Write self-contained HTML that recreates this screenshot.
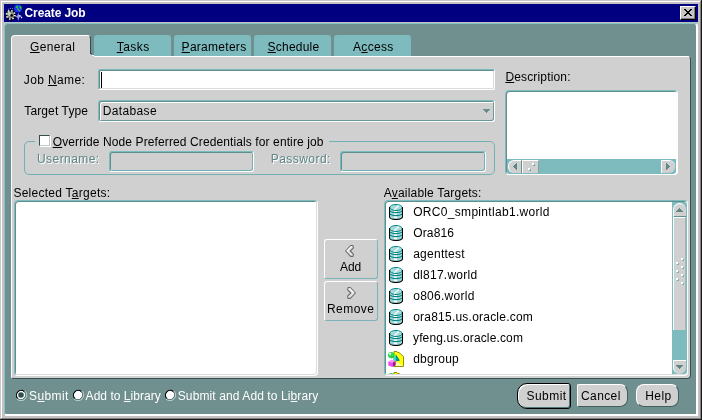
<!DOCTYPE html>
<html>
<head>
<meta charset="utf-8">
<title>Create Job</title>
<style>
html,body{margin:0;padding:0;}
body{width:702px;height:420px;overflow:hidden;background:#c0c0c0;position:relative;
  font-family:"Liberation Sans",sans-serif;font-size:12px;line-height:14px;color:#000;}
.a{position:absolute;box-sizing:border-box;}
.t{position:absolute;white-space:nowrap;line-height:14px;height:14px;}
u{text-decoration:underline;text-underline-offset:1px;text-decoration-thickness:1px;}
/* window frame */
#f0{left:0;top:0;width:702px;height:420px;background:#181818;}
#f1{left:0;top:0;width:701px;height:419px;background:#c8c4c8;}
#f2{left:1px;top:1px;width:700px;height:418px;background:#808080;}
#f3{left:1px;top:1px;width:699px;height:417px;background:#ffffff;}
#f4{left:2px;top:2px;width:698px;height:416px;background:#c4c0c4;}
#title{left:4px;top:4px;width:694px;height:18px;background:#000080;}
#close{left:680px;top:6px;width:16px;height:14px;background:#c6c3c6;
  border-top:1px solid #fff;border-left:1px solid #fff;border-right:1px solid #000;border-bottom:1px solid #000;}
#close i{position:absolute;left:0;top:0;right:0;bottom:0;border-right:1px solid #808080;border-bottom:1px solid #808080;}
/* teal panel */
#teal{left:4px;top:23px;width:694px;height:393px;background:#708f8f;
  border-left:1px solid #84c4c4;border-top:1px solid #84c4c4;border-right:2px solid #fff;border-bottom:2px solid #fff;border-radius:4px 4px 0 3px;}
/* gray panel */
#panel{left:11px;top:56px;width:680px;height:323px;background:#d0d0d0;
  border-top:1px solid #fff;border-left:1px solid #fff;border-right:1px solid #385050;border-bottom:1px solid #385050;
  border-radius:0 4px 4px 3px;}
.tab{top:35px;height:21px;width:77px;background:#7dbbbf;border-radius:3px 3px 0 0;}
#tab0{left:11px;top:35px;width:80px;height:18px;background:#d0d0d0;border-top:1px solid #fff;border-left:1px solid #fff;
  border-right:1px solid #2f4f4f;border-radius:4px 4px 0 0;}
/* fields */
.fld{background:#fff;border:1px solid #7bbcbf;border-right-color:#fff;border-bottom-color:#fff;border-radius:2px;box-shadow:inset 1px 1px 0 #668c8c,inset -1px -1px 0 #dcdcdc;}
.dis{background:#d0d0d0;border:1px solid #7bbcbf;border-right-color:#fff;border-bottom-color:#fff;border-radius:3px;box-shadow:inset 1px 1px 0 #668c8c,inset -1px -1px 0 #689a9c,inset 2px 2px 0 #fff;}
.dfld{background:#d0d0d0;border:1px solid #7bbcbf;border-right-color:#fff;border-bottom-color:#fff;border-radius:3px;box-shadow:inset 1px 1px 0 #5f8f8f,inset -1px -1px 0 #6fb0b4;}
.btn{background:#d0d0d0;border:1px solid #7ab4b8;border-top-color:#fff;border-left-color:#fff;border-radius:3px;}
.btn2{background:#d0d0d0;border:1px solid #3f5f5f;border-top-color:#fff;border-left-color:#fff;}
.sb{background:#d0d0d0;border-top:1px solid #fff;border-left:1px solid #fff;}
.gr{color:#5f8787;text-shadow:1px 1px 0 #fff;}
.w{color:#fff;}
</style>
</head>
<body>
<div id="w" class="a" style="left:0;top:0;width:702px;height:420px;will-change:transform">
<div class="a" id="f0"></div><div class="a" id="f1"></div><div class="a" id="f2"></div><div class="a" id="f3"></div><div class="a" id="f4"></div>
<div class="a" id="title">
  <svg class="a" style="left:0px;top:0px" width="20" height="18" viewBox="4 4 20 18">
    <circle cx="10.900" cy="15.100" r="4.200" fill="none" stroke="#000" stroke-width="2.200"/>
    <circle cx="10.700" cy="14.900" r="3.300" fill="#909090"/>
    <circle cx="10.700" cy="14.900" r="4.200" fill="none" stroke="#f4f4f4" stroke-width="1.700" stroke-dasharray="1.500 1.800"/>
    <circle cx="10.200" cy="14.400" r="1.500" fill="#d8d8d8"/>
    <circle cx="11.600" cy="15.400" r="1.300" fill="#000"/>
    <path d="M7.500 11.500l2.500 .5l-.5 2.500l-2 .5z" fill="#a0e0b0"/>
    <path d="M8 9.500A6 6 0 0 1 13 8.700" fill="none" stroke="#b0b0a0" stroke-width="1" stroke-dasharray="1 1.200"/>
    <circle cx="18" cy="8.400" r="3.900" fill="#1838f8"/>
    <path d="M15.500 7.500l1.500-2l1.200 .3l-.5 2.200l1.500 1.500l1.300 1.500l-.8 .6l-1.800-1.800l-1-1.500z" fill="#20c828"/>
    <path d="M19.500 5.800l1.800 .8l.5 2l-1 1l-.6-1.600l-1.200-1z" fill="#20c828"/>
    <rect x="17.600" y="9" width="1" height="1" fill="#f09030"/>
    <path d="M18.300 12.800l1 2.800l2.800 1l-2.800 1l-1 3.200l-1-3.200l-2-1l2-1z" fill="#9898e0"/>
    <rect x="19.300" y="15" width="1.200" height="1.200" fill="#fff"/><rect x="21" y="17" width="1.200" height="1.200" fill="#fff"/>
  </svg>
</div>
<div class="t w" style="left:24.5px;top:6px;letter-spacing:-0.1px;font-weight:bold">Create Job</div>
<div class="a" id="close"><i></i>
  <svg class="a" style="left:3px;top:2px" width="8" height="7" viewBox="0 0 8 7" shape-rendering="crispEdges"><path d="M0 0h2v1h1v1h2v-1h1v-1h2v1h-1v1h-1v1h-1v1h1v1h1v1h1v1h-2v-1h-1v-1h-2v1h-1v1h-2v-1h1v-1h1v-1h1v-1h-1v-1h-1v-1h-1z" fill="#000"/></svg>
</div>
<div class="a" id="teal"></div>

<!-- tabs -->
<div class="a tab" style="left:94px"></div>
<div class="a tab" style="left:174px"></div>
<div class="a tab" style="left:254px"></div>
<div class="a tab" style="left:334px"></div>
<div class="a" id="panel"></div>
<div class="a" id="tab0"></div>
<div class="a" style="left:11px;top:53px;width:79px;height:5px;background:#d0d0d0;border-left:1px solid #fff"></div>
<svg class="a" style="left:89px;top:52px" width="6" height="5" viewBox="0 0 6 5" shape-rendering="crispEdges">
<path d="M0 0h1v1h1v1h1v1h2v2h-5z" fill="#d0d0d0"/><rect x="1" y="0" width="1" height="1" fill="#2f4f4f"/><rect x="1" y="1" width="2" height="1" fill="#2f4f4f"/><rect x="2" y="2" width="1" height="1" fill="#4f9f9f"/><rect x="3" y="3" width="2" height="1" fill="#fff"/><rect x="5" y="4" width="1" height="1" fill="#fff"/>
</svg>
<div class="t" style="left:30px;top:40px;letter-spacing:0.375px"><u>G</u>eneral</div>
<div class="t" style="left:116.75px;top:40px;letter-spacing:0.45px"><u>T</u>asks</div>
<div class="t" style="left:181.6px;top:40px;letter-spacing:0.278px"><u>P</u>arameters</div>
<div class="t" style="left:267.6px;top:40px;letter-spacing:0.22px"><u>S</u>chedule</div>
<div class="t" style="left:353px;top:40px;letter-spacing:0.3px">A<u>c</u>cess</div>

<!-- form -->
<div class="t" style="left:23.75px;top:73px;letter-spacing:0.375px">Job <u>N</u>ame:</div>
<div class="a fld" style="left:98px;top:69px;width:397px;height:21px"></div>
<div class="a" style="left:101px;top:72px;width:1px;height:16px;background:#000"></div>
<div class="t" style="left:24.25px;top:104px;letter-spacing:0.125px">Target Type</div>
<div class="a dis" style="left:98px;top:100px;width:397px;height:22px"></div>
<div class="t" style="left:102.75px;top:104px;letter-spacing:0.357px">Database</div>
<svg class="a" style="left:483px;top:109px" width="7" height="4" viewBox="0 0 7 4" shape-rendering="crispEdges"><path d="M0 0h7v1h-1v1h-1v1h-1v1h-1v-1h-1v-1h-1v-1h-1z" fill="#6b8b8b"/></svg>

<div class="t" style="left:505.4px;top:70px;letter-spacing:0.16px"><u>D</u>escription:</div>
<div class="a fld" style="left:505px;top:90px;width:173px;height:85px;border-radius:4px;box-shadow:inset 1px 1px 0 #668c8c,inset -1px 0 0 #fff"></div>
<div class="a" style="left:507px;top:159px;width:169px;height:15px;background:#7dbbbf;border-radius:0 0 3px 2px"></div>
<div class="a sb" style="left:508px;top:160px;width:14px;height:13px;border-radius:6px 0 0 6px;border-right:1px solid #5f8f8f"></div>
<svg class="a" style="left:513px;top:163px" width="4" height="7" viewBox="0 0 4 7" shape-rendering="crispEdges"><path d="M3 0h1v7h-1v-1h-1v-1h-1v-1h-1v-1h1v-1h1v-1h1z" fill="#5f8787"/></svg>
<div class="a sb" style="left:522px;top:160px;width:17px;height:13px;border-right:1px solid #8aa0a0"></div>
<div class="a" style="left:532px;top:163px;width:2px;height:2px;background:#fff;box-shadow:1px 1px 0 #5fb0b0"></div>
<div class="a" style="left:528px;top:168px;width:2px;height:2px;background:#fff;box-shadow:1px 1px 0 #5fb0b0"></div>
<div class="a sb" style="left:661px;top:160px;width:14px;height:13px;border-radius:0 6px 6px 0"></div>
<svg class="a" style="left:666px;top:163px" width="4" height="7" viewBox="0 0 4 7" shape-rendering="crispEdges"><path d="M0 0h1v1h1v1h1v1h1v1h-1v1h-1v1h-1v1h-1z" fill="#5f8787"/></svg>

<!-- group box -->
<div class="a" style="left:24px;top:141px;width:471px;height:34px;border:1px solid #72b0b4;border-radius:5px"></div>
<div class="a" style="left:35px;top:135px;width:294px;height:12px;background:#d0d0d0"></div>
<div class="a" style="left:39px;top:135px;width:11px;height:11px;background:#fff;border:1px solid #2f4f4f;border-right-color:#c0cccc;border-bottom-color:#c0cccc;box-shadow:1px 1px 0 #fff"></div>
<div class="t" style="left:52.7px;top:135px;letter-spacing:0.108px"><u>O</u>verride Node Preferred Credentials for entire job</div>
<div class="t gr" style="left:37px;top:152px;letter-spacing:0.438px">Username:</div>
<div class="a dfld" style="left:109px;top:151px;width:145px;height:21px"></div>
<div class="t gr" style="left:270.75px;top:152px;letter-spacing:0.45px">Password:</div>
<div class="a dfld" style="left:340px;top:151px;width:146px;height:21px"></div>

<!-- lists -->
<div class="t" style="left:13.4px;top:186px;letter-spacing:0.262px">Selected T<u>a</u>rgets:</div>
<div class="a fld" style="left:14px;top:200px;width:304px;height:176px;border-radius:4px"></div>
<div class="t" style="left:383.75px;top:186px;letter-spacing:0.191px">A<u>v</u>ailable Targets:</div>
<div class="a fld" style="left:384px;top:200px;width:304px;height:176px;border-radius:4px"></div>
<div class="a" id="avail" style="left:0;top:0;width:672px;height:374px;overflow:hidden">
<svg class="a" style="left:389px;top:204px" width="14" height="16" viewBox="0 0 14 16"><path d="M0.5 3.5v9.200c0 1.500 2.900 2.800 6.500 2.800s6.500-1.300 6.500-2.800v-9.200z" fill="#a0d6d6"/> <path d="M1 7.100c1.300 1 3.500 1.500 6 1.500s4.700-.5 6-1.500M1 10.100c1.300 1 3.500 1.500 6 1.500s4.700-.5 6-1.500" stroke="#008686" stroke-width="1.100" fill="none"/> <path d="M5 6.900h3v1h-3zM5 9.400h3v1.400h-3zM5 12.400h3v1.600h-3z" fill="#fff"/> <ellipse cx="7" cy="3.500" rx="6.200" ry="3" fill="#a8dcdc" stroke="#008484" stroke-width="1"/> <path d="M5.300 5.900L9.900 1.300" stroke="#fff" stroke-width="1.200"/> <path d="M0.500 3v9.700c0 1.500 2.900 2.800 6.500 2.800s6.500-1.300 6.500-2.800v-9.700" fill="none" stroke="#000" stroke-width="1.100"/></svg><div class="t" style="left:413.2px;top:205px;letter-spacing:0.312px">ORC0_smpintlab1.world</div>
<svg class="a" style="left:389px;top:225px" width="14" height="16" viewBox="0 0 14 16"><path d="M0.5 3.5v9.200c0 1.500 2.900 2.800 6.500 2.800s6.500-1.300 6.500-2.800v-9.200z" fill="#a0d6d6"/> <path d="M1 7.100c1.300 1 3.500 1.500 6 1.500s4.700-.5 6-1.500M1 10.100c1.300 1 3.500 1.500 6 1.500s4.700-.5 6-1.500" stroke="#008686" stroke-width="1.100" fill="none"/> <path d="M5 6.900h3v1h-3zM5 9.400h3v1.400h-3zM5 12.400h3v1.600h-3z" fill="#fff"/> <ellipse cx="7" cy="3.500" rx="6.200" ry="3" fill="#a8dcdc" stroke="#008484" stroke-width="1"/> <path d="M5.300 5.900L9.900 1.300" stroke="#fff" stroke-width="1.200"/> <path d="M0.500 3v9.700c0 1.500 2.900 2.800 6.500 2.800s6.500-1.300 6.500-2.800v-9.700" fill="none" stroke="#000" stroke-width="1.100"/></svg><div class="t" style="left:413.2px;top:226px;letter-spacing:0.15px">Ora816</div>
<svg class="a" style="left:389px;top:246px" width="14" height="16" viewBox="0 0 14 16"><path d="M0.5 3.5v9.200c0 1.500 2.900 2.800 6.500 2.800s6.500-1.300 6.500-2.800v-9.200z" fill="#a0d6d6"/> <path d="M1 7.100c1.300 1 3.500 1.500 6 1.500s4.700-.5 6-1.500M1 10.100c1.300 1 3.500 1.500 6 1.500s4.700-.5 6-1.500" stroke="#008686" stroke-width="1.100" fill="none"/> <path d="M5 6.900h3v1h-3zM5 9.400h3v1.400h-3zM5 12.400h3v1.600h-3z" fill="#fff"/> <ellipse cx="7" cy="3.500" rx="6.200" ry="3" fill="#a8dcdc" stroke="#008484" stroke-width="1"/> <path d="M5.300 5.900L9.900 1.300" stroke="#fff" stroke-width="1.200"/> <path d="M0.500 3v9.700c0 1.500 2.900 2.800 6.500 2.800s6.500-1.300 6.500-2.800v-9.700" fill="none" stroke="#000" stroke-width="1.100"/></svg><div class="t" style="left:413.2px;top:247px;letter-spacing:0.25px">agenttest</div>
<svg class="a" style="left:389px;top:267px" width="14" height="16" viewBox="0 0 14 16"><path d="M0.5 3.5v9.200c0 1.500 2.900 2.800 6.500 2.800s6.500-1.300 6.500-2.800v-9.200z" fill="#a0d6d6"/> <path d="M1 7.100c1.300 1 3.500 1.500 6 1.500s4.700-.5 6-1.500M1 10.100c1.300 1 3.500 1.500 6 1.500s4.700-.5 6-1.500" stroke="#008686" stroke-width="1.100" fill="none"/> <path d="M5 6.900h3v1h-3zM5 9.400h3v1.400h-3zM5 12.400h3v1.600h-3z" fill="#fff"/> <ellipse cx="7" cy="3.500" rx="6.200" ry="3" fill="#a8dcdc" stroke="#008484" stroke-width="1"/> <path d="M5.300 5.900L9.900 1.300" stroke="#fff" stroke-width="1.200"/> <path d="M0.500 3v9.700c0 1.500 2.900 2.800 6.500 2.800s6.500-1.300 6.500-2.800v-9.700" fill="none" stroke="#000" stroke-width="1.100"/></svg><div class="t" style="left:413.2px;top:268px;letter-spacing:0.25px">dl817.world</div>
<svg class="a" style="left:389px;top:288px" width="14" height="16" viewBox="0 0 14 16"><path d="M0.5 3.5v9.200c0 1.500 2.900 2.800 6.500 2.800s6.500-1.300 6.500-2.800v-9.200z" fill="#a0d6d6"/> <path d="M1 7.100c1.300 1 3.500 1.500 6 1.500s4.700-.5 6-1.500M1 10.100c1.300 1 3.500 1.500 6 1.500s4.700-.5 6-1.500" stroke="#008686" stroke-width="1.100" fill="none"/> <path d="M5 6.900h3v1h-3zM5 9.400h3v1.400h-3zM5 12.400h3v1.600h-3z" fill="#fff"/> <ellipse cx="7" cy="3.500" rx="6.200" ry="3" fill="#a8dcdc" stroke="#008484" stroke-width="1"/> <path d="M5.300 5.900L9.900 1.300" stroke="#fff" stroke-width="1.200"/> <path d="M0.500 3v9.700c0 1.500 2.900 2.800 6.500 2.800s6.500-1.300 6.500-2.800v-9.700" fill="none" stroke="#000" stroke-width="1.100"/></svg><div class="t" style="left:413.2px;top:289px;letter-spacing:0.278px">o806.world</div>
<svg class="a" style="left:389px;top:309px" width="14" height="16" viewBox="0 0 14 16"><path d="M0.5 3.5v9.200c0 1.500 2.900 2.800 6.500 2.800s6.500-1.300 6.500-2.800v-9.200z" fill="#a0d6d6"/> <path d="M1 7.100c1.300 1 3.500 1.500 6 1.500s4.700-.5 6-1.500M1 10.100c1.300 1 3.500 1.500 6 1.500s4.700-.5 6-1.500" stroke="#008686" stroke-width="1.100" fill="none"/> <path d="M5 6.900h3v1h-3zM5 9.400h3v1.400h-3zM5 12.400h3v1.600h-3z" fill="#fff"/> <ellipse cx="7" cy="3.500" rx="6.200" ry="3" fill="#a8dcdc" stroke="#008484" stroke-width="1"/> <path d="M5.300 5.900L9.900 1.300" stroke="#fff" stroke-width="1.200"/> <path d="M0.500 3v9.700c0 1.500 2.900 2.800 6.500 2.800s6.500-1.300 6.500-2.800v-9.700" fill="none" stroke="#000" stroke-width="1.100"/></svg><div class="t" style="left:413.2px;top:310px;letter-spacing:0.224px">ora815.us.oracle.com</div>
<svg class="a" style="left:389px;top:330px" width="14" height="16" viewBox="0 0 14 16"><path d="M0.5 3.5v9.200c0 1.500 2.900 2.800 6.500 2.800s6.500-1.300 6.500-2.800v-9.200z" fill="#a0d6d6"/> <path d="M1 7.100c1.300 1 3.500 1.500 6 1.500s4.700-.5 6-1.500M1 10.100c1.300 1 3.500 1.500 6 1.500s4.700-.5 6-1.500" stroke="#008686" stroke-width="1.100" fill="none"/> <path d="M5 6.900h3v1h-3zM5 9.400h3v1.400h-3zM5 12.400h3v1.600h-3z" fill="#fff"/> <ellipse cx="7" cy="3.500" rx="6.200" ry="3" fill="#a8dcdc" stroke="#008484" stroke-width="1"/> <path d="M5.300 5.900L9.900 1.300" stroke="#fff" stroke-width="1.200"/> <path d="M0.500 3v9.700c0 1.500 2.900 2.800 6.500 2.800s6.500-1.300 6.500-2.800v-9.700" fill="none" stroke="#000" stroke-width="1.100"/></svg><div class="t" style="left:413px;top:331px;letter-spacing:0.139px">yfeng.us.oracle.com</div>
<svg class="a" style="left:388px;top:351px" width="16" height="17" viewBox="0 0 16 17"><path d="M6 0.500H9L9.600 1.500H11L15.500 5.600V15.500H6Z" fill="#ffff08" stroke="#8a8200" stroke-width="0.900" stroke-linejoin="round"/> <path d="M8.300 10.300L15 15H7.500Z" fill="#ffffa8"/> <circle cx="3.200" cy="4.100" r="3.200" fill="#2fd850"/> <path d="M6.300 4.800A3.200 3.200 0 0 1 2.500 7.200A4.500 4.500 0 0 0 6.300 4.800Z" fill="#109028"/> <circle cx="2.100" cy="2.900" r="1.100" fill="#e0ffe8"/> <path d="M7.800 3.200L5.100 9.300Q6.500 10.100 7.800 10.100Z" fill="#08f0f0"/> <path d="M7.800 3.200L11.900 9.500Q10 10.300 7.800 10.100Z" fill="#008c94"/> <path d="M0.300 10.500L3.500 8.800L7.700 10L4.500 11.800Z" fill="#ff8cff"/> <path d="M0.300 10.500L4.500 11.800V16L0.300 14.500Z" fill="#f048f0"/> <path d="M4.500 11.800L7.700 10V14.300L4.500 16Z" fill="#a010a8"/></svg><div class="t" style="left:413.2px;top:352px;letter-spacing:0.25px">dbgroup</div>
<svg class="a" style="left:388px;top:372px" width="16" height="17" viewBox="0 0 16 17"><path d="M6 0.500H9L9.600 1.500H11L15.500 5.600V15.500H6Z" fill="#ffff08" stroke="#8a8200" stroke-width="0.900" stroke-linejoin="round"/> <path d="M8.300 10.300L15 15H7.500Z" fill="#ffffa8"/> <circle cx="3.200" cy="4.100" r="3.200" fill="#2fd850"/> <path d="M6.300 4.800A3.200 3.200 0 0 1 2.500 7.200A4.500 4.500 0 0 0 6.300 4.800Z" fill="#109028"/> <circle cx="2.100" cy="2.900" r="1.100" fill="#e0ffe8"/> <path d="M7.800 3.200L5.100 9.300Q6.500 10.100 7.800 10.100Z" fill="#08f0f0"/> <path d="M7.800 3.200L11.900 9.500Q10 10.300 7.800 10.100Z" fill="#008c94"/> <path d="M0.300 10.500L3.500 8.800L7.700 10L4.500 11.800Z" fill="#ff8cff"/> <path d="M0.300 10.500L4.500 11.800V16L0.300 14.500Z" fill="#f048f0"/> <path d="M4.500 11.800L7.700 10V14.300L4.500 16Z" fill="#a010a8"/></svg>
</div>
<!-- v scrollbar -->
<div class="a" style="left:672px;top:202px;width:15px;height:172px;background:#7dbbbf;border-radius:0 3px 3px 0"></div>
<div class="a sb" style="left:673px;top:203px;width:13px;height:14px;border-radius:7px 7px 0 0;border-bottom:1px solid #5f8f8f"></div>
<svg class="a" style="left:676px;top:208px" width="7" height="4" viewBox="0 0 7 4" shape-rendering="crispEdges"><path d="M3 0h1v1h1v1h1v1h1v1h-7v-1h1v-1h1v-1h1z" fill="#5f8787"/></svg>
<div class="a sb" style="left:673px;top:217px;width:13px;height:113px;border-right:1px solid #a8b4b4"></div>
<div class="a" style="left:681px;top:258px;width:2px;height:2px;background:#fff;box-shadow:1px 1px 0 #6fb4b8"></div>
<div class="a" style="left:676px;top:262px;width:2px;height:2px;background:#fff;box-shadow:1px 1px 0 #6fb4b8"></div>
<div class="a" style="left:681px;top:266px;width:2px;height:2px;background:#fff;box-shadow:1px 1px 0 #6fb4b8"></div>
<div class="a" style="left:676px;top:270px;width:2px;height:2px;background:#fff;box-shadow:1px 1px 0 #6fb4b8"></div>
<div class="a" style="left:681px;top:274px;width:2px;height:2px;background:#fff;box-shadow:1px 1px 0 #6fb4b8"></div>
<div class="a" style="left:676px;top:278px;width:2px;height:2px;background:#fff;box-shadow:1px 1px 0 #6fb4b8"></div>
<div class="a" style="left:681px;top:282px;width:2px;height:2px;background:#fff;box-shadow:1px 1px 0 #6fb4b8"></div>
<div class="a sb" style="left:673px;top:360px;width:13px;height:14px;border-radius:0 0 7px 7px"></div>
<svg class="a" style="left:676px;top:365px" width="7" height="4" viewBox="0 0 7 4" shape-rendering="crispEdges"><path d="M0 0h7v1h-1v1h-1v1h-1v1h-1v-1h-1v-1h-1v-1h-1z" fill="#5f8787"/></svg>

<!-- add/remove -->
<div class="a btn" style="left:324px;top:239px;width:54px;height:40px"></div>
<svg class="a" style="left:345px;top:245px" width="9" height="12" viewBox="0 0 9 12"><path d="M0.600 6L5.600 0.600H8V1.200L8.400 2.800L5.200 6L8.400 9.200L8 11.400H5.600Z" fill="#e4e4e4" stroke="#6c6c6c" stroke-width="1.100" stroke-linejoin="round"/><path d="M1.900 6L6.200 1.700H7.200" stroke="#fff" stroke-width="1.100" fill="none"/></svg>
<div class="t" style="left:340px;top:260px;letter-spacing:-0.1px">Add</div>
<div class="a btn" style="left:324px;top:281px;width:54px;height:40px"></div>
<svg class="a" style="left:347px;top:287px" width="9" height="12" viewBox="0 0 9 12"><path d="M8.400 6L3.400 0.600H1L0.600 2.800L3.800 6L0.600 9.200L1 11.400H3.400Z" fill="#e4e4e4" stroke="#6c6c6c" stroke-width="1.100" stroke-linejoin="round"/><path d="M1.700 1.700H2.900L6.800 5.600" stroke="#fff" stroke-width="1.100" fill="none"/></svg>
<div class="t" style="left:327px;top:302px;letter-spacing:0.45px">Remove</div>

<!-- bottom -->
<svg class="a" style="left:15px;top:389px" width="13" height="13" viewBox="0 0 13 13"><path d="M9.960 2.040A5.600 5.600 0 0 1 2.040 9.960" fill="none" stroke="#d0d8d8" stroke-width="1"/><circle cx="6" cy="6" r="4.500" fill="#fff"/><path d="M2.680 9.320A4.700 4.700 0 0 1 9.320 2.680" fill="none" stroke="#000" stroke-width="1.200"/><path d="M9.320 2.680A4.700 4.700 0 0 1 2.680 9.320" fill="none" stroke="#4f6f6f" stroke-width="1"/><circle cx="6" cy="6" r="2.800" fill="#2f4f4f"/></svg>
<div class="t w" style="left:29px;top:389px;letter-spacing:0.4px">S<u>u</u>bmit</div>
<svg class="a" style="left:72px;top:389px" width="13" height="13" viewBox="0 0 13 13"><path d="M9.960 2.040A5.600 5.600 0 0 1 2.040 9.960" fill="none" stroke="#d0d8d8" stroke-width="1"/><circle cx="6" cy="6" r="4.500" fill="#fff"/><path d="M2.680 9.320A4.700 4.700 0 0 1 9.320 2.680" fill="none" stroke="#000" stroke-width="1.200"/><path d="M9.320 2.680A4.700 4.700 0 0 1 2.680 9.320" fill="none" stroke="#4f6f6f" stroke-width="1"/></svg>
<div class="t w" style="left:85.6px;top:389px;letter-spacing:0.03px">Add to <u>L</u>ibrary</div>
<svg class="a" style="left:164px;top:389px" width="13" height="13" viewBox="0 0 13 13"><path d="M9.960 2.040A5.600 5.600 0 0 1 2.040 9.960" fill="none" stroke="#d0d8d8" stroke-width="1"/><circle cx="6" cy="6" r="4.500" fill="#fff"/><path d="M2.680 9.320A4.700 4.700 0 0 1 9.320 2.680" fill="none" stroke="#000" stroke-width="1.200"/><path d="M9.320 2.680A4.700 4.700 0 0 1 2.680 9.320" fill="none" stroke="#4f6f6f" stroke-width="1"/></svg>
<div class="t w" style="left:177.75px;top:389px;letter-spacing:0.104px">Submit and Add to Li<u>b</u>rary</div>

<div class="a" style="left:517px;top:383px;width:54px;height:26px;background:#d0d0d0;border:1px solid #000;border-radius:10px 3px 3px 10px;box-shadow:inset 1px 1px 0 #fff,inset -1px -1px 0 #4f7777"></div>
<div class="t" style="left:526.5px;top:389px;letter-spacing:0.45px">Submit</div>
<div class="a btn2" style="left:577px;top:384px;width:51px;height:23px;border-radius:2px 8px 8px 2px"></div>
<div class="t" style="left:581px;top:389px;letter-spacing:0.4px">Cancel</div>
<div class="a btn2" style="left:636px;top:384px;width:43px;height:23px;border-radius:8px"></div>
<div class="t" style="left:645.25px;top:389px;letter-spacing:0.45px">Help</div>
</div>
</body>
</html>
